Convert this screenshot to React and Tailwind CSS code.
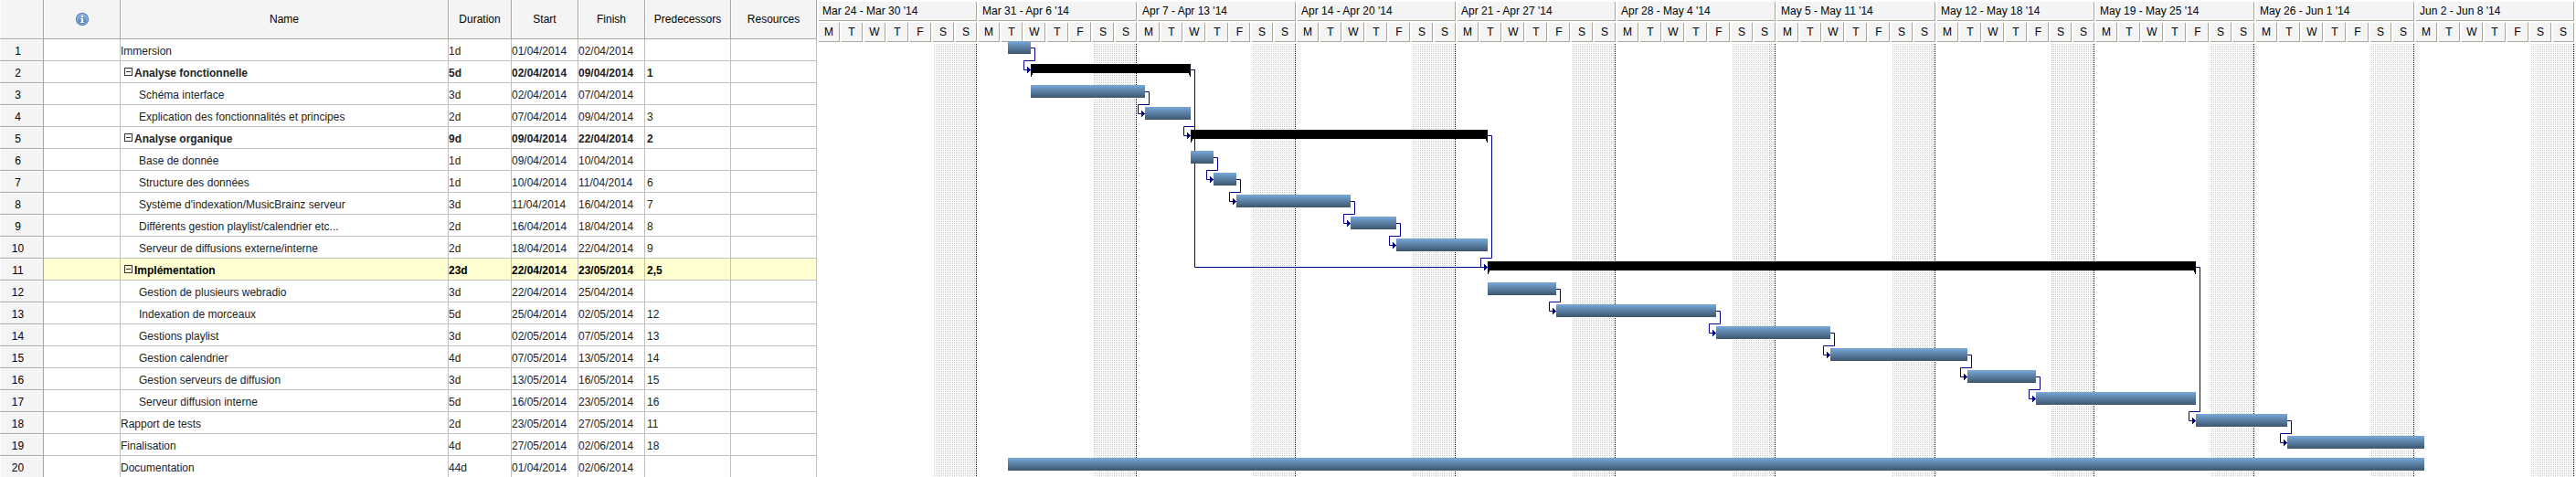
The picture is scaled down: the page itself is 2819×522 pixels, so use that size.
const DAY = 25;
const ROW = 24;
const BAR_HEIGHT = 14;
const LEAD = 7;

// start and end are counted in days from Monday, March 24
const tasks = [
  { id: 1, name: "Immersion", level: 0, duration: "1d", from: "01/04/2014", to: "02/04/2014", pred: "", start: 8, end: 9 },
  { id: 2, name: "Analyse fonctionnelle", summary: true, duration: "5d", from: "02/04/2014", to: "09/04/2014", pred: "1", start: 9, end: 16 },
  { id: 3, name: "Schéma interface", level: 1, duration: "3d", from: "02/04/2014", to: "07/04/2014", pred: "", start: 9, end: 14 },
  { id: 4, name: "Explication des fonctionnalités et principes", level: 1, duration: "2d", from: "07/04/2014", to: "09/04/2014", pred: "3", start: 14, end: 16 },
  { id: 5, name: "Analyse organique", summary: true, duration: "9d", from: "09/04/2014", to: "22/04/2014", pred: "2", start: 16, end: 29 },
  { id: 6, name: "Base de donnée", level: 1, duration: "1d", from: "09/04/2014", to: "10/04/2014", pred: "", start: 16, end: 17 },
  { id: 7, name: "Structure des données", level: 1, duration: "1d", from: "10/04/2014", to: "11/04/2014", pred: "6", start: 17, end: 18 },
  { id: 8, name: "Système d'indexation/MusicBrainz serveur", level: 1, duration: "3d", from: "11/04/2014", to: "16/04/2014", pred: "7", start: 18, end: 23 },
  { id: 9, name: "Différents gestion playlist/calendrier etc...", level: 1, duration: "2d", from: "16/04/2014", to: "18/04/2014", pred: "8", start: 23, end: 25 },
  { id: 10, name: "Serveur de diffusions externe/interne", level: 1, duration: "2d", from: "18/04/2014", to: "22/04/2014", pred: "9", start: 25, end: 29 },
  { id: 11, name: "Implémentation", summary: true, selected: true, duration: "23d", from: "22/04/2014", to: "23/05/2014", pred: "2,5", start: 29, end: 60 },
  { id: 12, name: "Gestion de plusieurs webradio", level: 1, duration: "3d", from: "22/04/2014", to: "25/04/2014", pred: "", start: 29, end: 32 },
  { id: 13, name: "Indexation de morceaux", level: 1, duration: "5d", from: "25/04/2014", to: "02/05/2014", pred: "12", start: 32, end: 39 },
  { id: 14, name: "Gestions playlist", level: 1, duration: "3d", from: "02/05/2014", to: "07/05/2014", pred: "13", start: 39, end: 44 },
  { id: 15, name: "Gestion calendrier", level: 1, duration: "4d", from: "07/05/2014", to: "13/05/2014", pred: "14", start: 44, end: 50 },
  { id: 16, name: "Gestion serveurs de diffusion", level: 1, duration: "3d", from: "13/05/2014", to: "16/05/2014", pred: "15", start: 50, end: 53 },
  { id: 17, name: "Serveur diffusion interne", level: 1, duration: "5d", from: "16/05/2014", to: "23/05/2014", pred: "16", start: 53, end: 60 },
  { id: 18, name: "Rapport de tests", level: 0, duration: "2d", from: "23/05/2014", to: "27/05/2014", pred: "11", start: 60, end: 64 },
  { id: 19, name: "Finalisation", level: 0, duration: "4d", from: "27/05/2014", to: "02/06/2014", pred: "18", start: 64, end: 70 },
  { id: 20, name: "Documentation", level: 0, duration: "44d", from: "01/04/2014", to: "02/06/2014", pred: "", start: 8, end: 70 },
];

// end is the x of the line that closes the week; short weeks have a narrower Friday
const weeks = [
  { label: "Mar 24 - Mar 30 '14", end: 172 },
  { label: "Mar 31 - Apr 6 '14", end: 347 },
  { label: "Apr 7 - Apr 13 '14", end: 521, short: true },
  { label: "Apr 14 - Apr 20 '14", end: 696 },
  { label: "Apr 21 - Apr 27 '14", end: 871 },
  { label: "Apr 28 - May 4 '14", end: 1046 },
  { label: "May 5 - May 11 '14", end: 1221 },
  { label: "May 12 - May 18 '14", end: 1395, short: true },
  { label: "May 19 - May 25 '14", end: 1570 },
  { label: "May 26 - Jun 1 '14", end: 1745 },
  { label: "Jun 2 - Jun 8 '14", end: 1920 },
];

const weekdays = ["M", "T", "W", "T", "F", "S", "S"];

const CHART_WIDTH = 1923;
const CHART_HEIGHT = tasks.length * ROW - 3;

const xOf = (day) => day * DAY + LEAD;
const yOf = (id) => (id - 1) * ROW;

const headCell =
  "border-r border-b border-[#aca899] bg-[#f4f4f4] p-0 text-center font-normal text-black shadow-[inset_1px_0_0_#ffffff]";
const cell = "border-r border-b border-[#c0c0c0] p-0 whitespace-nowrap overflow-hidden";
const cellText = "block pt-[3px] leading-5";

function InfoIcon() {
  return (
    <svg className="mx-auto block size-[14px]" viewBox="0 0 14 14" role="img" aria-label="Indicators">
      <defs>
        <linearGradient id="info-fill" x1="0" y1="0" x2="0" y2="1">
          <stop offset="0" stopColor="#8db4e2" />
          <stop offset="1" stopColor="#4a80c0" />
        </linearGradient>
      </defs>
      <circle cx="7" cy="7" r="7" fill="#3f6cab" />
      <circle cx="7" cy="7" r="6" fill="#a9c6e8" />
      <circle cx="7" cy="7" r="5.2" fill="url(#info-fill)" />
      <path d="M6 3h2v2H6zM5 6h3v4h1v1H5v-1h1V7H5z" fill="#ffffff" />
    </svg>
  );
}

function CollapseButton({ name }) {
  return (
    <button type="button" aria-label={`Collapse ${name}`} className="block size-[9px] shrink-0">
      <svg className="block size-[9px]" viewBox="0 0 9 9" shapeRendering="crispEdges">
        <path d="M0 0h9v9H0zM1 1v7h7V1z" fillRule="evenodd" fill="#333333" />
        <path d="M2 4h5v1H2z" fill="#333333" />
      </svg>
    </button>
  );
}

function TaskTable() {
  return (
    <table className="w-full table-fixed border-separate border-spacing-0 text-[12px] leading-5">
      <colgroup>
        <col className="w-[48px]" />
        <col className="w-[84px]" />
        <col />
        <col className="w-[69px]" />
        <col className="w-[73px]" />
        <col className="w-[73px]" />
        <col className="w-[94px]" />
        <col className="w-[94px]" />
      </colgroup>
      <thead>
        <tr className="h-[43px]">
          <th className={headCell} aria-label="Row" />
          <th className={headCell}>
            <InfoIcon />
          </th>
          <th className={headCell}>Name</th>
          <th className={headCell}>Duration</th>
          <th className={headCell}>Start</th>
          <th className={headCell}>Finish</th>
          <th className={headCell}>Predecessors</th>
          <th className={headCell}>Resources</th>
        </tr>
      </thead>
      <tbody>
        {tasks.map((t) => (
          <tr
            key={t.id}
            className={`h-6 last:h-[23px] last:[&>*]:border-b-0 ${t.summary ? "font-bold" : ""} ${
              t.selected ? "bg-[#ffffd2] text-black" : "text-[#222222]"
            }`}
          >
            <th
              scope="row"
              className="border-r border-b border-[#aca899] bg-[#f4f4f4] p-0 pr-2 text-center font-normal text-black shadow-[inset_1px_1px_0_#ffffff]"
            >
              <span className={cellText}>{t.id}</span>
            </th>
            <td className={cell} />
            <td className={cell}>
              {t.summary ? (
                <span className="flex items-center gap-[2px] pl-1">
                  <CollapseButton name={t.name} />
                  <span className={cellText}>{t.name}</span>
                </span>
              ) : (
                <span className={`${cellText} ${t.level ? "pl-5" : ""}`}>{t.name}</span>
              )}
            </td>
            <td className={cell}>
              <span className={cellText}>{t.duration}</span>
            </td>
            <td className={cell}>
              <span className={cellText}>{t.from}</span>
            </td>
            <td className={cell}>
              <span className={cellText}>{t.to}</span>
            </td>
            <td className={cell}>
              <span className={`${cellText} pl-[2px]`}>{t.pred}</span>
            </td>
            <td className={cell} />
          </tr>
        ))}
      </tbody>
    </table>
  );
}

function Timeline() {
  return (
    <div className="flex gap-[2px] pt-[2px] text-[12px] leading-5 text-black">
      {weeks.map(({ label, short }) => (
        <div key={label} className="flex flex-col gap-[2px]">
          <div className="border-r border-b border-[#aca899] bg-[#f4f4f4] pl-1 whitespace-nowrap">{label}</div>
          <div className="flex gap-[2px]">
            {weekdays.map((d, i) => (
              <div
                key={i}
                className={`border-r border-b border-[#aca899] bg-[#f4f4f4] text-center ${
                  short && d === "F" ? "w-[22px]" : "w-[23px]"
                }`}
              >
                {d}
              </div>
            ))}
          </div>
        </div>
      ))}
    </div>
  );
}

function Link({ from, to }) {
  const x1 = xOf(from.end);
  const y1 = yOf(from.id) + 7.5;
  const x2 = xOf(to.start);
  const y2 = yOf(to.id) + 7.5;
  const direct = from.id === 2 && to.id === 11;
  const d = direct
    ? `M${x1} ${y1}H${x1 + 4.5}V${y2}H${x2}`
    : `M${x1} ${y1}H${x1 + 4.5}V${y2 - 10}H${x2 - 7.5}V${y2}H${x2 + 1}`;
  return (
    <g>
      <path d={d} fill="none" stroke="#00008b" />
      <path d={`M${x2 - 4} ${y2 - 3.5}h1v1h1v1h1v1h1v1h-1v1h-1v1h-1v1h-1z`} fill="#00008b" />
    </g>
  );
}

function Summary({ task }) {
  const x1 = xOf(task.start);
  const x2 = xOf(task.end);
  const y = yOf(task.id) + 1;
  return <path d={`M${x1} ${y}H${x2}v14h-1v-2h-1v-2H${x1 + 2}v2h-1v2h-1z`} fill="#000000" />;
}

function Chart() {
  const links = tasks.flatMap((to) =>
    to.pred
      .split(",")
      .filter(Boolean)
      .map((id) => ({ from: tasks[Number(id) - 1], to }))
  );
  return (
    <svg
      className="relative -mt-px block"
      width={CHART_WIDTH}
      height={CHART_HEIGHT}
      viewBox={`0 0 ${CHART_WIDTH} ${CHART_HEIGHT}`}
      role="img"
      aria-label="Gantt chart"
    >
      <defs>
        <linearGradient id="bar-fill" x1="0" y1="0" x2="0" y2="1">
          <stop offset="0" stopColor="#78a8d8" />
          <stop offset="1" stopColor="#3c566e" />
        </linearGradient>
        <pattern id="weekend" width="4" height="4" patternUnits="userSpaceOnUse">
          <path d="M0 1h1v1H0zM2 1h1v1H2zM0 3h1v1H0z" fill="#c8c8c8" />
          <path d="M2 3h1v1H2z" fill="#d6d6d6" />
        </pattern>
      </defs>
      {weeks.map(({ label, end }) => (
        <g key={label} transform={`translate(${end - 46} 0)`}>
          <rect y="3" width="45" height={CHART_HEIGHT - 3} fill="url(#weekend)" />
          <path d={`M46.5 3V${CHART_HEIGHT}`} stroke="#000000" strokeDasharray="1 1" />
        </g>
      ))}
      {tasks.filter((t) => t.summary).map((t) => (
        <Summary key={t.id} task={t} />
      ))}
      {links.map(({ from, to }) => (
        <Link key={`${from.id}-${to.id}`} from={from} to={to} />
      ))}
      {tasks.filter((t) => !t.summary).map((t) => (
        <rect
          key={t.id}
          x={xOf(t.start)}
          y={yOf(t.id)}
          width={(t.end - t.start) * DAY}
          height={BAR_HEIGHT}
          fill="url(#bar-fill)"
        />
      ))}
    </svg>
  );
}

export default function App() {
  return (
    <main className="flex items-start gap-[2px] overflow-x-auto bg-white font-['Liberation_Sans',Arial,sans-serif]">
      <div className="min-w-[894px] flex-1">
        <TaskTable />
      </div>
      <div className="shrink-0">
        <Timeline />
        <Chart />
      </div>
    </main>
  );
}
